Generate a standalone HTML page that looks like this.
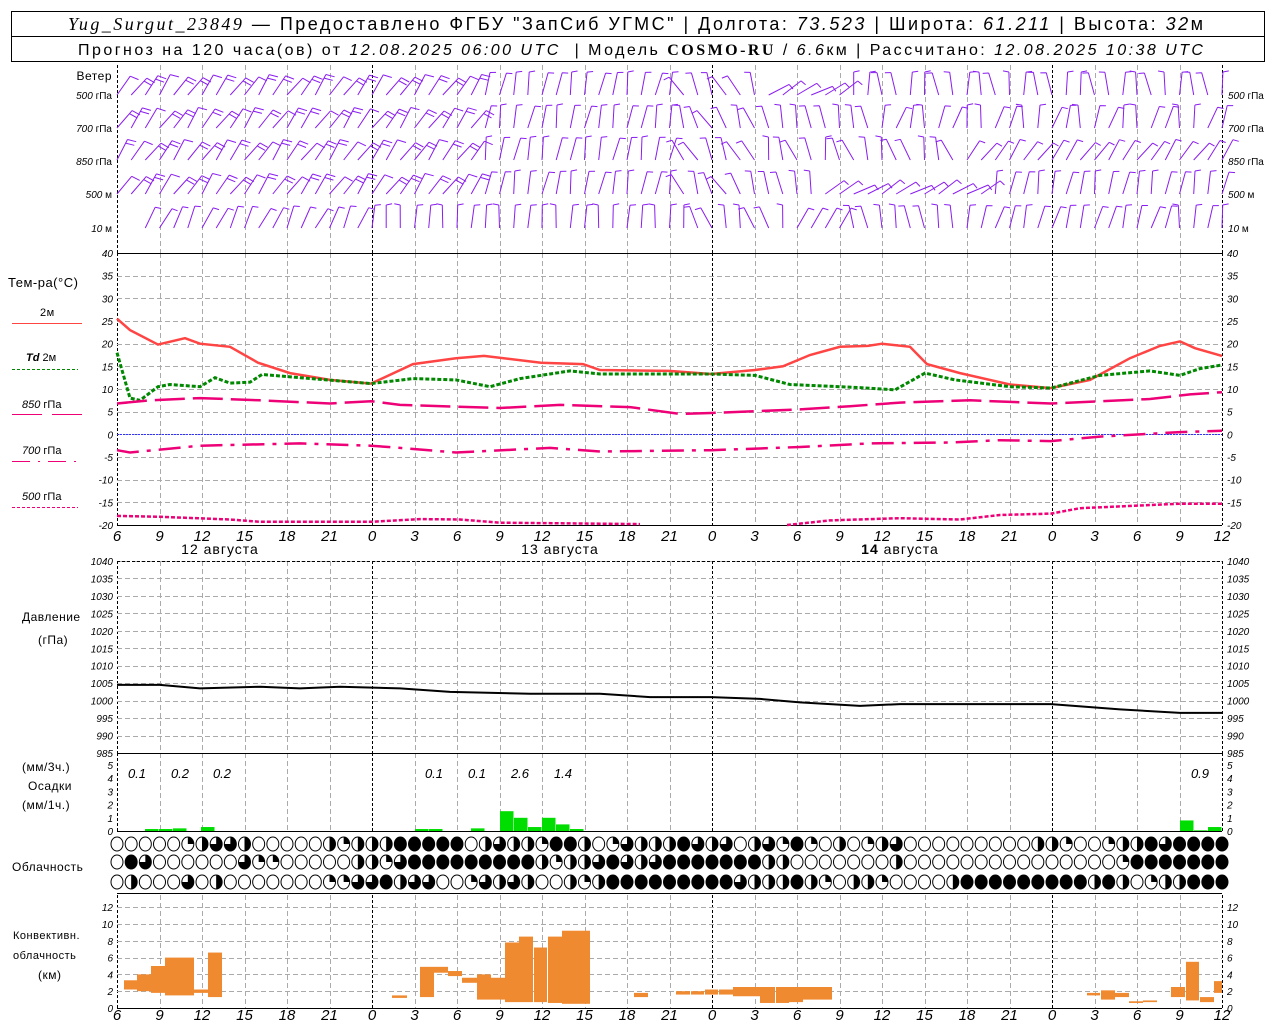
<!DOCTYPE html>
<html><head><meta charset="utf-8">
<style>
html,body{margin:0;padding:0;background:#fff;}
body{width:1280px;height:1024px;overflow:hidden;position:relative;font-family:"Liberation Sans",sans-serif;}
svg{position:absolute;left:0;top:0;}
</style></head>
<body>
<svg id="s" width="1280" height="1024" xmlns="http://www.w3.org/2000/svg" font-family="Liberation Sans, sans-serif">
<rect x="11.5" y="11.5" width="1253" height="50" fill="none" stroke="#000" stroke-width="1"/>
<line x1="11" y1="36.5" x2="1265" y2="36.5" stroke="#000"/>
<text x="68" y="30" font-size="18" fill="#000" textLength="1135" lengthAdjust="spacing" xml:space="preserve"><tspan font-style="italic" font-family="Liberation Serif, serif">Yug_Surgut_23849</tspan> — Предоставлено ФГБУ "ЗапСиб УГМС" | Долгота: <tspan font-style="italic">73.523</tspan> | Широта: <tspan font-style="italic">61.211</tspan> | Высота: <tspan font-style="italic">32</tspan>м</text>
<text x="78" y="55" font-size="16" fill="#000" textLength="1125" lengthAdjust="spacing" xml:space="preserve">Прогноз на 120 часа(ов) от <tspan font-style="italic">12.08.2025 06:00 UTC</tspan>  | Модель <tspan font-weight="bold" font-family="Liberation Serif, serif">COSMO-RU</tspan> / <tspan font-style="italic">6.6</tspan>км | Рассчитано: <tspan font-style="italic">12.08.2025 10:38 UTC</tspan></text>
<g id="g"></g>
</svg>
<script>
const S=document.getElementById('g');const NS='http://www.w3.org/2000/svg';
function el(t,a,txt){const e=document.createElementNS(NS,t);for(const k in a)e.setAttribute(k,a[k]);if(txt!==undefined)e.textContent=txt;S.appendChild(e);return e;}
const X=h=>117+h*14.1667;
const L=117,R=1222;
function vgrid(y1,y2){for(let h=0;h<=78;h+=3){const x=Math.round(X(h))+0.5;const major=((6+h)%24)==0||h==0||h==78;el('line',{x1:x,y1:y1,x2:x,y2:y2,stroke:major?'#000':'#aaa','stroke-dasharray':major?'3,2':'5,3','stroke-width':1});}}
function hgrid(ys){ys.forEach(y=>el('line',{x1:L,y1:y+0.5,x2:R,y2:y+0.5,stroke:'#aaa','stroke-dasharray':'5,3'}));}
vgrid(65,253);vgrid(253,525);vgrid(561,753);vgrid(753,831);vgrid(895,1008);
const TY=t=>253+(40-t)*4.533;
const tys=[];for(let t=35;t>=-15;t-=5)tys.push(Math.round(TY(t)));hgrid(tys);
el('line',{x1:L,y1:434.5,x2:R,y2:434.5,stroke:'#33f','stroke-dasharray':'2,1'});
for(let t=40;t>=-20;t-=5){const y=TY(t)+4;el('text',{x:113,y:y,'text-anchor':'end','font-size':10,'font-style':'italic'},t);el('text',{x:1227,y:y,'font-size':10,'font-style':'italic'},t);}
const PY=p=>561+(1040-p)*3.4909;
const pys=[];for(let p=1040;p>985;p-=5)pys.push(Math.round(PY(p)));hgrid(pys);
for(let p=1040;p>=985;p-=5){const y=PY(p)+4;el('text',{x:113,y:y,'text-anchor':'end','font-size':10,'font-style':'italic'},p);el('text',{x:1227,y:y,'font-size':10,'font-style':'italic'},p);}
const RY=v=>831-v*13.2;
for(let v=5;v>=0;v--){const y=RY(v)+4;el('text',{x:113,y:y,'text-anchor':'end','font-size':10,'font-style':'italic'},v);el('text',{x:1227,y:y,'font-size':10,'font-style':'italic'},v);}
const CY=v=>1008-v*8.4;
const cys=[];for(let v=12;v>0;v-=2)cys.push(Math.round(CY(v)));hgrid(cys);
for(let v=12;v>=0;v-=2){const y=CY(v)+4;el('text',{x:113,y:y,'text-anchor':'end','font-size':10,'font-style':'italic'},v);el('text',{x:1227,y:y,'font-size':10,'font-style':'italic'},v);}
[[253],[525],[753],[831],[893],[1008]].forEach(a=>el('line',{x1:L,y1:a[0]+0.5,x2:R,y2:a[0]+0.5,stroke:'#000'}));
el('line',{x1:L,y1:561.5,x2:R,y2:561.5,stroke:'#000','stroke-dasharray':'3,2'});
for(let h=0;h<=78;h+=3){const v=(6+h)%24;el('text',{x:X(h),y:541,'text-anchor':'middle','font-size':15,'font-style':'italic'},v);el('text',{x:X(h),y:1020,'text-anchor':'middle','font-size':15,'font-style':'italic'},v);}
el('text',{x:220,y:554,'text-anchor':'middle','font-size':14,'letter-spacing':'1'},'12 августа');
el('text',{x:560,y:554,'text-anchor':'middle','font-size':14,'letter-spacing':'1'},'13 августа');
const d14=el('text',{x:900,y:554,'text-anchor':'middle','font-size':14,'letter-spacing':'1'},'');d14.innerHTML='<tspan font-weight="bold">14</tspan> августа';
const lab=(x,y,t,s,anchor)=>el('text',{x:x,y:y,'font-size':s||12,'text-anchor':anchor||'start','letter-spacing':'0.5'},t);
lab(112,80,'Ветер',12,'end');
const wl=[['500 гПа',99],['700 гПа',132],['850 гПа',165],['500 м',198],['10   м',232]];
wl.forEach(w=>{const t=el('text',{x:112,y:w[1],'font-size':10,'text-anchor':'end'},'');t.innerHTML='<tspan font-style="italic">'+w[0].split(' ')[0]+'</tspan> '+w[0].split(' ').slice(1).join(' ').trim();
const t2=el('text',{x:1228,y:w[1],'font-size':10},'');t2.innerHTML=t.innerHTML;});
lab(8,287,'Тем-ра(°С)',13);
lab(40,316,'2м',11);el('line',{x1:12,y1:323.5,x2:82,y2:323.5,stroke:'#f44','stroke-width':1});
const td=el('text',{x:26,y:361,'font-size':11},'');td.innerHTML='<tspan font-style="italic" font-weight="bold">Td</tspan>  2м';
el('line',{x1:12,y1:369.5,x2:78,y2:369.5,stroke:'#080','stroke-dasharray':'3,2'});
const l850=el('text',{x:22,y:408,'font-size':11},'');l850.innerHTML='<tspan font-style="italic">850</tspan> гПа';
el('line',{x1:12,y1:414.5,x2:42,y2:414.5,stroke:'#e07'});el('line',{x1:52,y1:414.5,x2:82,y2:414.5,stroke:'#e07'});
const l700=el('text',{x:22,y:454,'font-size':11},'');l700.innerHTML='<tspan font-style="italic">700</tspan> гПа';
el('line',{x1:12,y1:461.5,x2:78,y2:461.5,stroke:'#e07','stroke-dasharray':'18,8,2,8'});
const l500=el('text',{x:22,y:500,'font-size':11},'');l500.innerHTML='<tspan font-style="italic">500</tspan> гПа';
el('line',{x1:12,y1:507.5,x2:78,y2:507.5,stroke:'#e07','stroke-dasharray':'3,2'});
lab(22,621,'Давление',12);lab(38,644,'(гПа)',12);
lab(22,771,'(мм/3ч.)',12);lab(28,790,'Осадки',12);lab(22,809,'(мм/1ч.)',12);
lab(12,871,'Облачность',12);
lab(13,939,'Конвективн.',11);lab(13,959,'облачность',11);lab(38,979,'(км)',12);
function curve(pts,fy,attrs){let d='';pts.forEach((p,i)=>{d+=(i?'L':'M')+p[0]+','+fy(p[1]).toFixed(1);});const a=Object.assign({d:d,fill:'none'},attrs);el('path',a);}
curve([[117,25.5],[130,23],[158,19.8],[185,21.2],[200,20],[230,19.3],[258,15.8],[290,13.5],[330,12],[371,11.2],[413,15.5],[456,16.8],[484,17.3],[541,15.8],[583,15.5],[600,14.2],[669,14],[711,13.3],[755,14.2],[783,15],[810,17.5],[840,19.3],[868,19.5],[882,20],[910,19.3],[927,15.5],[960,13.5],[1010,11],[1051,10.2],[1090,12],[1130,16.8],[1160,19.5],[1180,20.5],[1195,19],[1222,17.3]],TY,{stroke:'#f44','stroke-width':2.5});
curve([[117,18],[130,8],[140,7.5],[158,10.5],[170,11],[200,10.5],[215,12.5],[230,11.3],[250,11.5],[262,13.2],[300,12.5],[371,11.2],[413,12.3],[456,12],[490,10.5],[520,12.3],[570,14],[600,13.3],[711,13.3],[755,13],[790,11],[860,10.3],[895,9.8],[925,13.5],[955,12],[1010,10.5],[1051,10.2],[1100,13],[1150,14],[1180,13],[1200,14.5],[1222,15.3]],TY,{stroke:'#080','stroke-width':3,'stroke-dasharray':'4,2'});
curve([[117,6.8],[150,7.5],[200,8],[260,7.5],[330,6.8],[371,7.3],[400,6.5],[500,5.8],[560,6.5],[630,6],[680,4.5],[711,4.7],[800,5.5],[850,6.2],[900,7],[970,7.5],[1051,6.8],[1150,7.8],[1190,8.8],[1222,9.3]],TY,{stroke:'#e07','stroke-width':2.5,'stroke-dasharray':'30,8'});
curve([[117,-3.5],[130,-4],[200,-2.5],[300,-2],[371,-2.5],[400,-3],[456,-4],[550,-3],[600,-3.8],[711,-3.5],[800,-2.8],[870,-2],[950,-1.8],[1000,-1.3],[1051,-1.5],[1100,-0.5],[1180,0.5],[1222,0.8]],TY,{stroke:'#e07','stroke-width':2.5,'stroke-dasharray':'22,8,4,8'});
curve([[117,-18],[160,-18.2],[230,-18.8],[260,-19.3],[330,-19.3],[371,-19.3],[420,-18.7],[460,-18.8],[500,-19.5],[640,-19.8]],TY,{stroke:'#e07','stroke-width':2.5,'stroke-dasharray':'4,2'});
curve([[787,-20],[830,-19],[900,-18.5],[960,-18.8],[1000,-17.8],[1051,-17.5],[1080,-16.3],[1180,-15.3],[1222,-15.3]],TY,{stroke:'#e07','stroke-width':2.5,'stroke-dasharray':'4,2'});
curve([[117,1004.5],[160,1004.5],[200,1003.5],[260,1004],[300,1003.5],[340,1004],[400,1003.5],[450,1002.5],[530,1002],[600,1002],[650,1001],[711,1001],[760,1000.5],[800,999.5],[860,998.5],[900,999],[1051,999],[1120,997.5],[1180,996.5],[1222,996.5]],PY,{stroke:'#000','stroke-width':2});
[[145,0.15],[159,0.15],[173,0.2],[201,0.3],[415,0.15],[429,0.15],[471,0.2],[500,1.5],[514,1.0],[528,0.3],[542,1.0],[556,0.5],[570,0.15],[1180,0.8],[1194,0.05],[1208,0.3]].forEach(b=>el('rect',{x:b[0],y:RY(b[1]),width:13.5,height:b[1]*13.2,fill:'#0d0'}));
[[137,'0.1'],[180,'0.2'],[222,'0.2'],[434,'0.1'],[477,'0.1'],[520,'2.6'],[563,'1.4'],[1200,'0.9']].forEach(t=>el('text',{x:t[0],y:778,'text-anchor':'middle','font-size':13,'font-style':'italic'},t[1]));
[[124,137,2.2,3.3],[137,151,2.0,4.0],[151,165,1.8,5.0],[165,194,1.5,6.0],[194,208,1.8,2.2],[208,222,1.3,6.6],[392,407,1.2,1.5],[420,434,1.3,4.9],[434,448,4.2,4.9],[448,462,3.8,4.4],[462,477,3.0,3.6],[477,491,1.0,4.0],[491,505,1.0,3.6],[505,519,0.7,7.8],[519,533,0.7,8.5],[534,547,0.7,7.2],[548,562,0.6,8.5],[562,590,0.5,9.2],[634,648,1.3,1.8],[676,690,1.6,2.0],[691,704,1.6,2.0],[705,718,1.6,2.2],[719,733,1.6,2.2],[733,760,1.4,2.5],[760,775,0.6,2.5],[776,789,0.6,2.5],[789,803,0.7,2.5],[803,818,1.0,2.5],[818,832,1.0,2.5],[1087,1100,1.5,1.8],[1101,1115,1.0,2.1],[1115,1129,1.3,1.8],[1129,1143,0.6,0.8],[1143,1157,0.7,0.9],[1171,1185,1.3,2.5],[1186,1199,0.9,5.5],[1200,1214,0.7,1.3],[1214,1222,1.8,3.2]].forEach(b=>el('rect',{x:b[0],y:CY(b[3]),width:b[1]-b[0],height:(b[3]-b[2])*8.4,fill:'#f08a30'}));
const r1=[0,0,0,0,0,1,2,3,3,2,0,0,0,0,0,2,1,2,2,2,4,4,4,4,4,0,2,3,2,2,1,4,4,2,0,1,3,2,2,2,4,3,2,3,0,2,3,1,4,1,0,2,0,1,2,3,0,0,0,0,0,0,0,0,0,2,2,1,0,0,1,2,2,4,3,4,4,4,4];
const r2=[0,4,3,0,0,0,0,0,0,3,1,1,0,0,0,0,0,2,2,1,3,4,4,4,4,4,4,4,4,4,2,1,2,2,3,4,3,2,3,4,4,4,4,4,4,4,2,2,0,0,0,0,0,0,0,2,0,0,0,0,0,0,0,0,0,0,0,0,0,0,0,1,4,4,4,4,4,4,4];
const r3=[0,2,0,0,0,3,0,2,0,0,0,0,0,0,0,1,1,3,3,4,2,3,3,0,0,1,3,2,3,2,0,0,2,1,2,4,4,4,4,4,4,4,4,4,3,2,2,2,4,2,1,0,2,2,1,0,0,0,0,2,4,4,4,4,4,4,4,4,4,2,4,2,0,1,2,2,4,4,4];
function cloud(cx,cy,s){const rx=6,ry=7;
if(s==4){el('ellipse',{cx:cx,cy:cy,rx:rx,ry:ry,fill:'#000',stroke:'#000'});return;}
el('ellipse',{cx:cx,cy:cy,rx:rx,ry:ry,fill:'#fff',stroke:'#000'});
if(s==1)el('path',{d:`M${cx},${cy}L${cx},${cy-ry}A${rx},${ry} 0 0 1 ${cx+rx},${cy}Z`,fill:'#000'});
if(s==2)el('path',{d:`M${cx},${cy-ry}A${rx},${ry} 0 0 1 ${cx},${cy+ry}Z`,fill:'#000'});
if(s==3)el('path',{d:`M${cx},${cy}L${cx},${cy-ry}A${rx},${ry} 0 1 1 ${cx-rx},${cy}Z`,fill:'#000'});
}
[[r1,844],[r2,862],[r3,882]].forEach(r=>{for(let h=0;h<=78;h++)cloud(X(h),r[1],r[0][h]||0);});
const rows=[95,128,160,194,228];
function ang(row,h){const n=Math.sin(h*1.7+row*2.3)*8;
if(row==4){if(h<2)return null;if(h<18)return 25+n;if(h<40)return 3+n*0.6;if(h<48)return -15+n*2;if(h<52)return 30;if(h<60)return -10+n;if(h<75)return 15+n;return 5+n;}
if(h<26)return 35+n;if(h<40)return 10+n;if(h<46)return -25+n*2;
if(row==0){if(h<52)return 60+n;return -5+n*1.5;}
if(row==1){if(h<54)return -10+n;return 10+n*2;}
if(row==2){if(h<60)return -15+n*2;return 35+n;}
if(row==3){if(h<50)return -10+n;if(h<62)return 60+n;return 10+n;}
return 20;}
rows.forEach((by,ri)=>{for(let h=0;h<=78;h++){const a=ang(ri,h);if(a===null)continue;const x=X(h);const rad=a*Math.PI/180;const len=23;
const tx=x+Math.sin(rad)*len,ty=by-Math.cos(rad)*len;let d=`M${x.toFixed(1)},${by}L${tx.toFixed(1)},${ty.toFixed(1)}`;
const side=(a>=0)?1:-1;const fa=rad+side*1.35;
const nf=(h<26&&ri<4)?((h+ri)%3==0?1:2):1;const fl=(h<26&&ri<4)?9:6;
for(let k=0;k<nf;k++){const px=x+Math.sin(rad)*(len-k*4),py=by-Math.cos(rad)*(len-k*4);d+=`M${px.toFixed(1)},${py.toFixed(1)}l${(Math.sin(fa)*fl).toFixed(1)},${(-Math.cos(fa)*fl).toFixed(1)}`;}
el('path',{d:d,stroke:'#8a1cf0','stroke-width':1,fill:'none'});}});
</script>
</body></html>
